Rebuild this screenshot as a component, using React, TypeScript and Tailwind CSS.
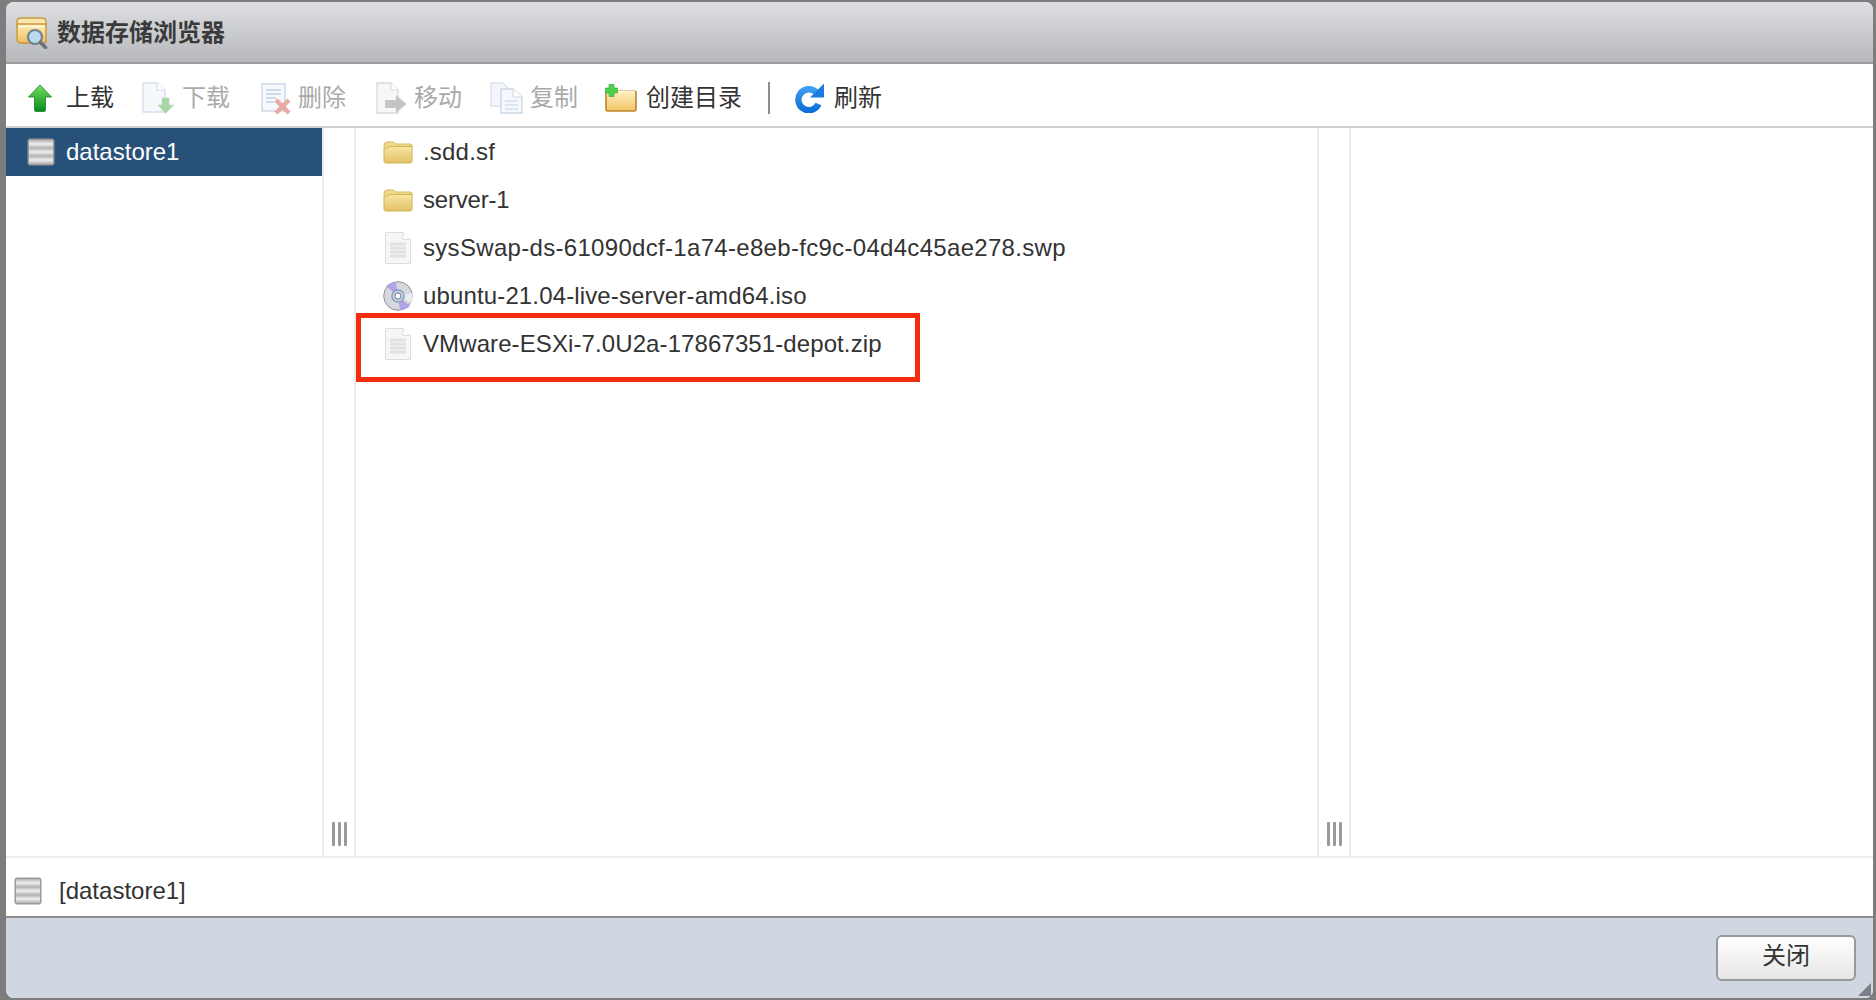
import React from "react";

const FONT = { fontFamily: '"Liberation Sans","Noto Sans CJK SC",Arial,sans-serif' };

function Defs() {
  return (
    <svg width="0" height="0" className="absolute">
      <defs>
        <linearGradient id="folderG" x1="0" y1="0" x2="0" y2="1">
          <stop offset="0" stopColor="#f8e7a6" />
          <stop offset="1" stopColor="#e3c163" />
        </linearGradient>
        <linearGradient id="newFolderG" x1="0" y1="0" x2="0" y2="1">
          <stop offset="0" stopColor="#fdf0c4" />
          <stop offset="1" stopColor="#f2c565" />
        </linearGradient>
        <linearGradient id="titleFolderG" x1="0" y1="0" x2="0" y2="1">
          <stop offset="0" stopColor="#fdeebc" />
          <stop offset="1" stopColor="#f0bd5c" />
        </linearGradient>
        <linearGradient id="diskG" x1="0" y1="0" x2="0" y2="1">
          <stop offset="0" stopColor="#b4b4b4" />
          <stop offset="0.5" stopColor="#f0f0f0" />
          <stop offset="1" stopColor="#b0b0b0" />
        </linearGradient>
        <linearGradient id="upG" x1="0" y1="0" x2="0" y2="1">
          <stop offset="0" stopColor="#72de5e" />
          <stop offset="1" stopColor="#0a8a1e" />
        </linearGradient>
        <linearGradient id="refreshG" x1="0" y1="0" x2="0" y2="1">
          <stop offset="0" stopColor="#3d9bf0" />
          <stop offset="1" stopColor="#0f6fd6" />
        </linearGradient>
      </defs>
    </svg>
  );
}

function FolderIcon() {
  return (
    <svg width="30" height="24" viewBox="0 0 30 24">
      <path d="M1 6 Q1 2 4 2 H10 L13 4 H27 Q29 4 29 6 V9 H1 Z" fill="#efd98c" stroke="#d6b95f" strokeWidth="1" />
      <path d="M1 9 Q8 5 15 6.5 H29 V21 Q29 23 27 23 H3 Q1 23 1 21 Z" fill="url(#folderG)" stroke="#d4b356" strokeWidth="1" />
    </svg>
  );
}

function FileIcon() {
  return (
    <svg width="26" height="32" viewBox="0 0 26 32">
      <path d="M0.5 0.5 H18 L25.5 7.5 V31.5 H0.5 Z" fill="#f6f6f6" stroke="#dedede" />
      <path d="M18 0.5 V7.5 H25.5" fill="#ffffff" stroke="#dedede" />
      <path d="M5 12 H21 M5 16 H21 M5 20 H21 M5 24 H21" stroke="#e2e2e2" strokeWidth="2.8" />
    </svg>
  );
}

function CdIcon() {
  return (
    <svg width="30" height="30" viewBox="0 0 30 30">
      <circle cx="15" cy="15" r="14.3" fill="#d6d8de" stroke="#8e8e96" strokeWidth="1" />
      <path d="M15 15 L3 5 A14 14 0 0 1 13 1.2 Z" fill="#b3a2e6" />
      <path d="M15 15 L27 25 A14 14 0 0 1 17 28.8 Z" fill="#b3a2e6" />
      <path d="M15 15 L29 12 A14 14 0 0 1 28 22 Z" fill="#e9ebf1" />
      <circle cx="15" cy="15" r="6.2" fill="#bfcde2" stroke="#8799b4" strokeWidth="1.2" />
      <circle cx="15" cy="15" r="3" fill="#ffffff" stroke="#76809a" strokeWidth="1" />
    </svg>
  );
}

function DiskIcon() {
  return (
    <svg width="28" height="28" viewBox="0 0 28 28">
      <rect x="0.5" y="0.5" width="27" height="27" rx="3" fill="#999999" />
      <rect x="2" y="2" width="24" height="8" fill="url(#diskG)" />
      <rect x="2" y="10" width="24" height="8" fill="url(#diskG)" />
      <rect x="2" y="18" width="24" height="8" fill="url(#diskG)" />
    </svg>
  );
}

function TitleIcon() {
  return (
    <svg width="32" height="32" viewBox="0 0 32 32">
      <path d="M1 5 Q1 1 5 1 H26 Q30 1 30 5 V9 H1 Z" fill="#fbe6b0" stroke="#c79a45" strokeWidth="1.4" />
      <path d="M1 7 H30 V24 Q30 26 28 26 H5 Q1 26 1 22 Z" fill="url(#titleFolderG)" stroke="#c9973f" strokeWidth="1.4" />
      <path d="M3 9.5 H28" stroke="#fff6dc" strokeWidth="1.5" />
      <circle cx="19" cy="20" r="7" fill="#bcd9ee" stroke="#6e8294" strokeWidth="2.2" />
      <path d="M24.5 25.5 L29.5 30.5" stroke="#67727c" strokeWidth="3.6" strokeLinecap="round" />
    </svg>
  );
}

function UpIcon() {
  return (
    <svg width="24" height="28" viewBox="0 0 24 28">
      <path d="M12 1 L23.5 13 H17.5 V26 Q17.5 27.5 16 27.5 H8 Q6.5 27.5 6.5 26 V13 H0.5 Z" fill="url(#upG)" stroke="#17832a" strokeWidth="0.8" />
    </svg>
  );
}

function DownloadIcon() {
  return (
    <svg width="32" height="32" viewBox="0 0 32 32">
      <path d="M1 1 H15 L23 8 V30 H1 Z" fill="#f5f8fc" stroke="#d5dfec" strokeWidth="1.4" />
      <path d="M15 1 V8 H23" fill="#ffffff" stroke="#d5dfec" strokeWidth="1.2" />
      <path d="M20 16 H27 V23 H31.5 L23.5 31.5 L16 23 H20 Z" fill="#a5d8a5" stroke="#b8dcb8" strokeWidth="0.6" />
    </svg>
  );
}

function DeleteIcon() {
  return (
    <svg width="30" height="32" viewBox="0 0 30 32">
      <rect x="1" y="2" width="23" height="27" fill="#f5f8fc" stroke="#cfdcea" strokeWidth="1.6" />
      <path d="M5 8 H20 M5 12 H20 M5 16 H15 M5 20 H13" stroke="#c4d0de" strokeWidth="1.6" />
      <path d="M15 18 L28 31 M28 18 L15 31" stroke="#eba7a2" strokeWidth="4.4" />
    </svg>
  );
}

function MoveIcon() {
  return (
    <svg width="32" height="32" viewBox="0 0 32 32">
      <path d="M1 1 H15 L22 8 V31 H1 Z" fill="#f7f7f7" stroke="#dadada" strokeWidth="1.4" />
      <path d="M15 1 V8 H22" fill="#fff" stroke="#dadada" strokeWidth="1.2" />
      <path d="M9 18 H20 V13 L30.5 22 L20 31 V26 H9 Z" fill="#c4c4c4" />
    </svg>
  );
}

function CopyIcon() {
  return (
    <svg width="34" height="32" viewBox="0 0 34 32">
      <path d="M1 1 H13 L19 7 V24 H1 Z" fill="#f3f6fa" stroke="#dbe3ec" strokeWidth="1.4" />
      <path d="M11 7 H23 L32 15 V31 H11 Z" fill="#f5f8fc" stroke="#ccd7e4" strokeWidth="1.4" />
      <path d="M23 7 V15 H32" fill="#fff" stroke="#ccd7e4" />
      <path d="M15 19 H28 M15 23 H28 M15 27 H28" stroke="#d5dfea" strokeWidth="1.6" />
    </svg>
  );
}

function NewFolderIcon() {
  return (
    <svg width="32" height="28" viewBox="0 0 32 28">
      <path d="M1 9 Q1 7 3 7 H30 Q31 7 31 9 V25 Q31 27 29 27 H3 Q1 27 1 25 Z" fill="url(#newFolderG)" stroke="#b9862c" strokeWidth="1.6" />
      <path d="M12 7.5 H30" stroke="#fff4d2" strokeWidth="2" />
      <path d="M4 0.5 H9 V4 H12.5 V9 H9 V12.5 H4 V9 H0.5 V4 H4 Z" fill="#4fd04a" stroke="#2fa52e" strokeWidth="0.6" />
    </svg>
  );
}

function RefreshIcon() {
  return (
    <svg width="30" height="30" viewBox="0 0 30 30">
      <path d="M21 9 A10.5 10.5 0 1 0 23.5 21" fill="none" stroke="url(#refreshG)" strokeWidth="6.4" />
      <path d="M29 0.5 V14.5 H15 Z" fill="#1c7bdc" />
    </svg>
  );
}

function Tool({
  icon,
  label,
  disabled,
  iconW,
  gap,
  left,
}: {
  icon: React.ReactNode;
  label: string;
  disabled?: boolean;
  iconW: string;
  gap: string;
  left: string;
}) {
  return (
    <div className={`flex items-center ${left}`}>
      <div className={`flex justify-center ${iconW}`}>{icon}</div>
      <span className={`${gap} text-[24px] leading-none whitespace-nowrap ${disabled ? "text-[#aaaaaa]" : "text-[#333333]"}`}>
        {label}
      </span>
    </div>
  );
}

function Grip() {
  return (
    <div className="flex flex-col justify-end h-full">
      <div className="flex justify-center gap-[3px] mb-[10px]">
        <div className="w-[3px] h-[24px] bg-[#999999] rounded-[1px]" />
        <div className="w-[3px] h-[24px] bg-[#999999] rounded-[1px]" />
        <div className="w-[3px] h-[24px] bg-[#999999] rounded-[1px]" />
      </div>
    </div>
  );
}

function FileRow({ icon, name, tracking }: { icon: React.ReactNode; name: string; tracking: string }) {
  return (
    <div className="flex items-center h-[48px]">
      <div className="flex justify-center w-[32px] ml-[26px]">{icon}</div>
      <span className={`ml-[9px] text-[24px] leading-none text-[#333333] whitespace-nowrap ${tracking}`}>{name}</span>
    </div>
  );
}

export default function App() {
  return (
    <div className="w-[1876px] h-[1000px] bg-[#7d7d7d] pt-[2px] pl-[6px] pr-[3px] pb-[2px] overflow-hidden" style={FONT}>
      <Defs />
      <div className="relative flex flex-col h-full rounded-[8px] overflow-hidden bg-white">
        <div className="flex items-center h-[60px] shrink-0 pl-[10px] pt-[2px] bg-gradient-to-b from-[#dedfe3] to-[#b6b8bc]">
          <TitleIcon />
          <span className="ml-[9px] text-[24px] leading-none font-bold text-[#3a3a3a]">数据存储浏览器</span>
        </div>
        <div className="flex items-center h-[66px] shrink-0 bg-white border-t-2 border-b-2 border-t-[#9b9b9b] border-b-[#d0d0d0] pl-[22px] pt-[5px]">
          <Tool icon={<UpIcon />} label="上载" iconW="w-[24px]" gap="ml-[14px]" left="" />
          <Tool icon={<DownloadIcon />} label="下载" disabled iconW="w-[32px]" gap="ml-[8px]" left="ml-[28px]" />
          <Tool icon={<DeleteIcon />} label="删除" disabled iconW="w-[30px]" gap="ml-[7px]" left="ml-[31px]" />
          <Tool icon={<MoveIcon />} label="移动" disabled iconW="w-[32px]" gap="ml-[6px]" left="ml-[30px]" />
          <Tool icon={<CopyIcon />} label="复制" disabled iconW="w-[34px]" gap="ml-[6px]" left="ml-[28px]" />
          <Tool icon={<NewFolderIcon />} label="创建目录" iconW="w-[32px]" gap="ml-[9px]" left="ml-[27px]" />
          <div className="w-[2px] h-[32px] bg-[#8e8e8e] ml-[26px]" />
          <Tool icon={<RefreshIcon />} label="刷新" iconW="w-[30px]" gap="ml-[9px]" left="ml-[25px]" />
        </div>
        <div className="flex flex-1 min-h-0 border-b-2 border-b-[#ececec]">
          <div className="w-[316px] shrink-0">
            <div className="flex items-center h-[48px] bg-[#285179] pl-[21px]">
              <DiskIcon />
              <span className="ml-[11px] text-[24px] leading-none text-white">datastore1</span>
            </div>
          </div>
          <div className="w-[34px] shrink-0 border-l-2 border-r-2 border-[#ececec]">
            <Grip />
          </div>
          <div className="w-[961px] shrink-0">
            <FileRow icon={<FolderIcon />} name=".sdd.sf" tracking="tracking-[0.2px]" />
            <FileRow icon={<FolderIcon />} name="server-1" tracking="tracking-[-0.2px]" />
            <FileRow icon={<FileIcon />} name="sysSwap-ds-61090dcf-1a74-e8eb-fc9c-04d4c45ae278.swp" tracking="tracking-[0.31px]" />
            <FileRow icon={<CdIcon />} name="ubuntu-21.04-live-server-amd64.iso" tracking="tracking-[0.14px]" />
            <FileRow icon={<FileIcon />} name="VMware-ESXi-7.0U2a-17867351-depot.zip" tracking="tracking-[0.1px]" />
          </div>
          <div className="w-[34px] shrink-0 border-l-2 border-r-2 border-[#ececec]">
            <Grip />
          </div>
          <div className="flex-1" />
        </div>
        <div className="flex items-center h-[58px] shrink-0 pl-[8px] pt-[7px]">
          <DiskIcon />
          <span className="ml-[17px] text-[24px] leading-none text-[#333333]">[datastore1]</span>
        </div>
        <div className="flex items-center justify-end h-[82px] shrink-0 bg-[#d0d7e0] border-t-2 border-t-[#8f8f8f] pr-[17px]">
          <button className="w-[140px] h-[46px] pb-[4px] rounded-[6px] border-2 border-[#999999] bg-gradient-to-b from-white to-[#e6e6e6] text-[24px] leading-none text-[#333333]">
            关闭
          </button>
        </div>
        <svg className="absolute right-[2px] bottom-[2px]" width="13" height="13" viewBox="0 0 13 13">
          <path d="M13 0 V13 H0 Z" fill="#7d8086" />
        </svg>
        <div className="absolute left-[350px] top-[311px] w-[564px] h-[69px] border-[5px] border-[#f52c0e]" />
      </div>
    </div>
  );
}
